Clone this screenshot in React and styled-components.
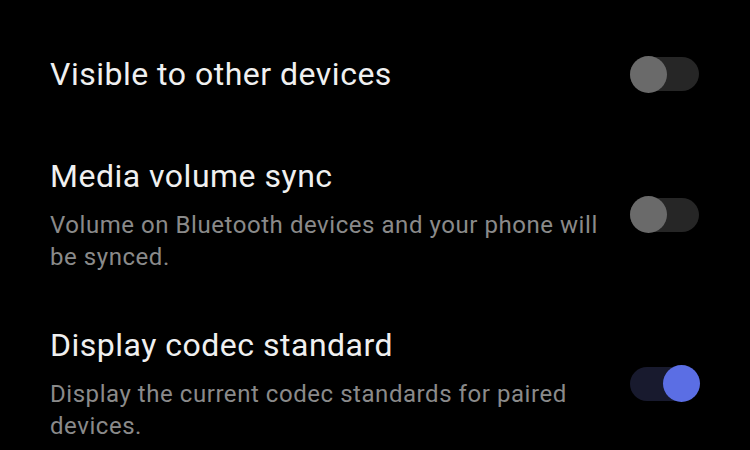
import React from 'react';
import styled, { createGlobalStyle } from 'styled-components';

const GlobalStyle = createGlobalStyle`
    html, body {
        margin: 0;
        padding: 0;
        background: #000;
    }
    body {
        font-family: Roboto, "Noto Sans", "Liberation Sans", sans-serif;
    }
`;

const List = styled.div`
    width: 750px;
    height: 450px;
    overflow: hidden;
    background: #000;
    padding: 18px 51px 0 50px;
    box-sizing: border-box;
`;

const Row = styled.div`
    display: flex;
    align-items: center;
    justify-content: space-between;
    min-height: 60px;
    padding: 26px 0;
`;

const Text = styled.div`
    display: flex;
    flex-direction: column;
    max-width: 565px;
`;

const Title = styled.div`
    font-size: 32px;
    line-height: 40px;
    letter-spacing: 0.5px;
    color: #f0f0f0;
`;

const Summary = styled.div`
    margin-top: 13px;
    font-size: 24px;
    line-height: 32px;
    letter-spacing: 0.55px;
    color: #8a8a8a;
`;

const Track = styled.div`
    position: relative;
    flex: none;
    width: 69px;
    height: 34px;
    border-radius: 17px;
    background: ${(p) => (p.on ? '#181a2e' : '#262626')};
`;

const Knob = styled.div`
    position: absolute;
    top: -1.5px;
    left: ${(p) => (p.on ? '33px' : '0')};
    width: 37px;
    height: 37px;
    border-radius: 50%;
    background: ${(p) => (p.on ? '#5b6ee4' : '#6a6a6a')};
`;

function Switch({ on }) {
    return (
        <Track on={on ? 1 : 0}>
            <Knob on={on ? 1 : 0} />
        </Track>
    );
}

const items = [
    { title: 'Visible to other devices', on: false },
    {
        title: 'Media volume sync',
        summary: 'Volume on Bluetooth devices and your phone will be synced.',
        on: false,
    },
    {
        title: 'Display codec standard',
        summary: 'Display the current codec standards for paired devices.',
        on: true,
    },
];

export default function App() {
    return (
        <>
            <GlobalStyle />
            <List>
                {items.map((item) => (
                    <Row key={item.title}>
                        <Text>
                            <Title>{item.title}</Title>
                            {item.summary && <Summary>{item.summary}</Summary>}
                        </Text>
                        <Switch on={item.on} />
                    </Row>
                ))}
            </List>
        </>
    );
}
